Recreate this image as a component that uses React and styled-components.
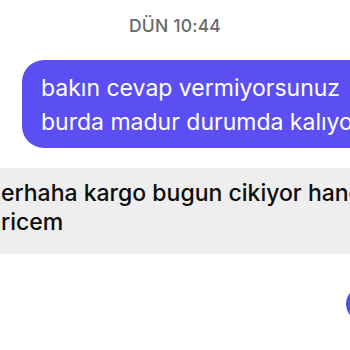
import React from "react";
import styled, { createGlobalStyle } from "styled-components";

const Global = createGlobalStyle`
  html, body { margin: 0; padding: 0; background: #ffffff; }
  body { width: 350px; height: 350px; overflow: hidden; font-family: Inter, "Noto Sans", sans-serif; }
`;

const Screen = styled.div`
  width: 350px;
  height: 350px;
  overflow: hidden;
  display: flex;
  flex-direction: column;
  background: #ffffff;
`;

const Stamp = styled.div`
  margin-top: 15px;
  text-align: center;
  font-size: 17.5px;
  line-height: 22px;
  font-weight: 500;
  color: #696969;
  letter-spacing: 0.2px;
`;

const OutRow = styled.div`
  display: flex;
  margin-top: 23px;
  padding-left: 22px;
`;

const OutBubble = styled.div`
  flex: 1;
  height: 88px;
  box-sizing: border-box;
  padding: 11px 0 0 19px;
  background: #5b4ff3;
  border-radius: 22px 0 0 22px;
  color: #ffffff;
  font-size: 23px;
  line-height: 34px;
  white-space: nowrap;
  overflow: hidden;
`;

const InBubble = styled.div`
  margin-top: 20px;
  height: 86px;
  box-sizing: border-box;
  padding: 11px 0 0 1px;
  background: #eeeeee;
  color: #0d0d0d;
  font-size: 23px;
  font-weight: 500;
  line-height: 29px;
  white-space: nowrap;
  overflow: hidden;
`;

const Line = styled.div``;

const FabRow = styled.div`
  display: flex;
  justify-content: flex-end;
  margin-top: 33px;
  margin-right: -30px;
`;

const Fab = styled.div`
  width: 34px;
  height: 34px;
  border-radius: 50%;
  background: #4b52e6;
`;

export default function App() {
  return (
    <>
      <Global />
      <Screen>
        <Stamp>DÜN 10:44</Stamp>
        <OutRow>
          <OutBubble>
            <Line>bakın cevap vermiyorsunuz</Line>
            <Line>burda madur durumda kalıyoruz</Line>
          </OutBubble>
        </OutRow>
        <InBubble>
          <Line>erhaha kargo bugun cikiyor haneye</Line>
          <Line>ricem</Line>
        </InBubble>
        <FabRow>
          <Fab />
        </FabRow>
      </Screen>
    </>
  );
}
